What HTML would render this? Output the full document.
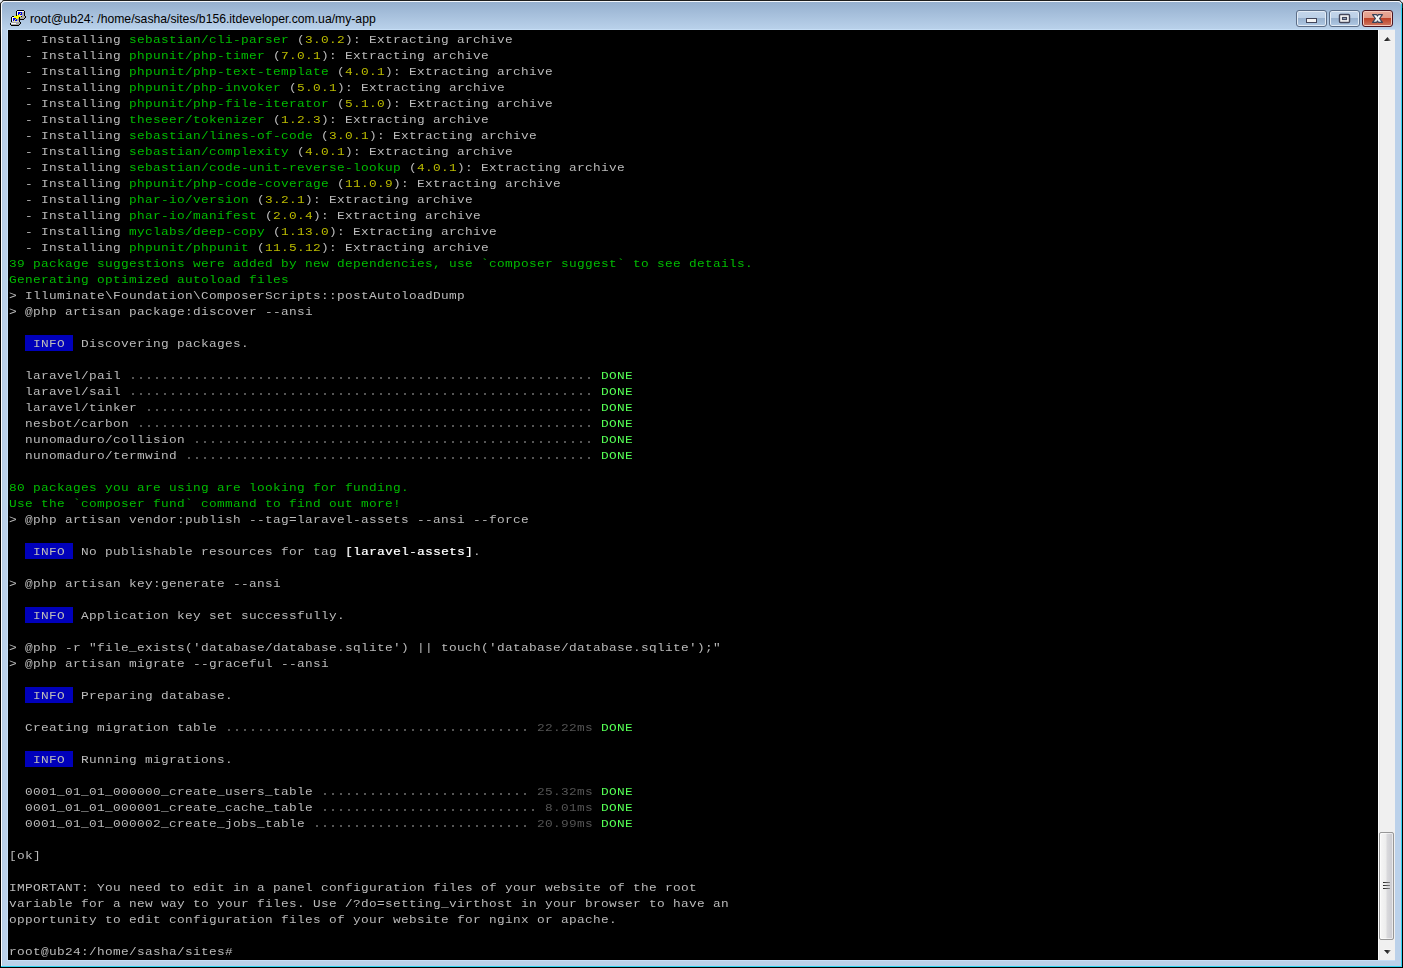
<!DOCTYPE html>
<html><head><meta charset="utf-8">
<style>
html,body{margin:0;padding:0;width:1403px;height:968px;overflow:hidden;background:#000;}
#win{position:absolute;left:0;top:0;width:1403px;height:968px;background:#BBD1EA;}
#bl{position:absolute;left:0;top:0;width:1px;height:968px;background:linear-gradient(#1e1e1e 0,#1e1e1e 30px,#000 40px,#000);}
#bl2{position:absolute;left:2px;top:29px;width:1px;height:937px;background:#B3CBE4;}
#bw{position:absolute;left:1px;top:1px;width:1px;height:966px;background:#fdfdfe;}
#bt{position:absolute;left:0;top:0;width:1403px;height:1px;background:#1e1e1e;}
#btw{position:absolute;left:1px;top:1px;width:1398px;height:1px;background:#f4f7fb;}
#title{position:absolute;left:2px;top:2px;width:1399px;height:27px;background:linear-gradient(#96B0CF,#B9D1EA);}
#br{position:absolute;left:1402px;top:0;width:1px;height:968px;background:#000;}
#brc{position:absolute;left:1401px;top:2px;width:1px;height:965px;background:#2fd4f2;}
#bb{position:absolute;left:0;top:967px;width:1403px;height:1px;background:#000;}
#bbc{position:absolute;left:1px;top:966px;width:1401px;height:1px;background:#2fd4f2;}
#inner{position:absolute;left:7px;top:29px;width:1388px;height:932px;background:#C6DEF6;}
#term{position:absolute;left:8px;top:30px;width:1370px;height:930px;background:#000;overflow:hidden;}
#rows{position:absolute;left:9px;top:32px;width:1369px;height:928px;overflow:hidden;will-change:transform}
.r{position:absolute;left:0;height:16px;line-height:16px;white-space:pre;font-family:"Liberation Mono",monospace;font-size:12.8px;letter-spacing:0.32px;color:#BBBBBB;transform:scaleY(0.9);transform-origin:0 12px;}
.g{color:#00BB00}.y{color:#BBBB00}.G{color:#55FF55}.k{color:#555555}.w{color:#FFFFFF;text-shadow:0.5px 0 0 rgba(255,255,255,0.55)}
.INFO{color:#BBBBBB}
.bg{position:absolute;height:16px;background:#0000BB;}
.dots{position:absolute;height:16px;background:linear-gradient(90deg,transparent 3px,#555555 3px,#555555 5px,transparent 5px) 0 10px/8px 2px repeat-x;}
#ttext{position:absolute;left:30px;top:11px;font-family:"Liberation Sans",sans-serif;font-size:12.2px;color:#000;white-space:pre;line-height:16px;}
#sb{position:absolute;left:1378px;top:30px;width:17px;height:930px;background:#F0F0F0;}

.cb{position:absolute;top:10px;width:29px;height:15px;border:1px solid #5C6E88;border-radius:3px;box-shadow:inset 0 0 0 1px #E3ECF6;background:linear-gradient(#C3D5EA 0,#BCD0E7 7px,#98B1CE 7px,#A6BFDB 12px,#B2CBE6 15px);}
#bmin{left:1296px}#bmax{left:1329px}
#bclose{left:1362px;border-color:#4A1420;box-shadow:inset 0 0 0 1px #F6C9BC;background:linear-gradient(#E9AA99 0,#E29A88 7px,#BD3F25 7px,#C45A42 11px,#D07A64 15px);}
.sbarrow{position:absolute;left:1384px;width:0;height:0;border-left:3.5px solid transparent;border-right:3.5px solid transparent;}
#sbup{top:37px;border-bottom:4px solid #3a3a3a;}
#sbdn{top:950px;border-top:4px solid #3a3a3a;}
#thumb{position:absolute;left:1379px;top:832px;width:13px;height:106px;border:1px solid #979797;border-radius:2px;background:linear-gradient(90deg,#F6F6F6 0,#EDEDED 45%,#D9D9DC 55%,#CACACF 100%);box-shadow:inset 0 0 0 1px rgba(255,255,255,.6);}
.grip{position:absolute;left:1383px;width:7px;height:1px;background:linear-gradient(90deg,#222,#888);}
#sbedge{position:absolute;left:1378px;top:30px;width:1px;height:930px;background:#FCFCFC;}
#sbedge2{position:absolute;left:1379px;top:30px;width:1px;height:930px;background:#E6E6E6;}
</style></head><body>
<div id="win">
<div id="title"></div>
<div id="inner"></div>
<div id="bt"></div><div id="btw"></div>
<div id="bl"></div><div id="bl2"></div><div id="bw"></div>
<div id="br"></div><div id="brc"></div>
<div id="bb"></div><div id="bbc"></div>
<svg width="8" height="8" style="position:absolute;left:0;top:0"><rect x="0" y="0" width="8" height="8" fill="none"/><path d="M0 0 H5 A5 5 0 0 0 0 5 Z" fill="#E4EAF1"/><path d="M0.5 8 V5 A4.5 4.5 0 0 1 5 0.5 H8" fill="none" stroke="#1e1e1e" stroke-width="1"/><path d="M1.5 8 V5 A3.5 3.5 0 0 1 5 1.5 H8" fill="none" stroke="#f6f8fb" stroke-width="1"/></svg>
<svg width="8" height="8" style="position:absolute;left:1395px;top:0"><path d="M8 0 H3 A5 5 0 0 1 8 5 Z" fill="#E4EAF1"/><path d="M7.5 8 V5 A4.5 4.5 0 0 0 3 0.5 H0" fill="none" stroke="#1e1e1e" stroke-width="1"/><path d="M6.5 8 V5 A3.5 3.5 0 0 0 3 1.5 H0" fill="none" stroke="#f4f7fb" stroke-width="1"/><path d="M6.5 8 V4" stroke="#2fd4f2" stroke-width="1"/></svg>
<svg id="icon" width="18" height="18" viewBox="0 0 18 18" shape-rendering="crispEdges" style="position:absolute;left:9px;top:9px"><rect x="1" y="14" width="1" height="1" fill="#000"/><rect x="1" y="15" width="1" height="1" fill="#000"/><rect x="2" y="8" width="1" height="1" fill="#000"/><rect x="2" y="9" width="1" height="1" fill="#000"/><rect x="2" y="10" width="1" height="1" fill="#000"/><rect x="2" y="11" width="1" height="1" fill="#000"/><rect x="2" y="12" width="1" height="1" fill="#000"/><rect x="2" y="13" width="1" height="1" fill="#A8A8A8"/><rect x="2" y="14" width="1" height="1" fill="#FFFFFF"/><rect x="2" y="15" width="1" height="1" fill="#A8A8A8"/><rect x="2" y="16" width="1" height="1" fill="#000"/><rect x="3" y="7" width="1" height="1" fill="#000"/><rect x="3" y="8" width="1" height="1" fill="#FFFFFF"/><rect x="3" y="9" width="1" height="1" fill="#FFFFFF"/><rect x="3" y="10" width="1" height="1" fill="#FFFFFF"/><rect x="3" y="11" width="1" height="1" fill="#FFFFFF"/><rect x="3" y="12" width="1" height="1" fill="#D8D8D8"/><rect x="3" y="13" width="1" height="1" fill="#A8A8A8"/><rect x="3" y="14" width="1" height="1" fill="#FFFFFF"/><rect x="3" y="15" width="1" height="1" fill="#A8A8A8"/><rect x="3" y="16" width="1" height="1" fill="#000"/><rect x="4" y="7" width="1" height="1" fill="#000"/><rect x="4" y="8" width="1" height="1" fill="#FFFFFF"/><rect x="4" y="9" width="1" height="1" fill="#0000F0"/><rect x="4" y="10" width="1" height="1" fill="#0000F0"/><rect x="4" y="11" width="1" height="1" fill="#0000F0"/><rect x="4" y="12" width="1" height="1" fill="#D8D8D8"/><rect x="4" y="13" width="1" height="1" fill="#A8A8A8"/><rect x="4" y="14" width="1" height="1" fill="#FFFFFF"/><rect x="4" y="15" width="1" height="1" fill="#A8A8A8"/><rect x="4" y="16" width="1" height="1" fill="#000"/><rect x="5" y="7" width="1" height="1" fill="#FFFF00"/><rect x="5" y="8" width="1" height="1" fill="#FFFF00"/><rect x="5" y="9" width="1" height="1" fill="#0000F0"/><rect x="5" y="10" width="1" height="1" fill="#0000F0"/><rect x="5" y="11" width="1" height="1" fill="#FFFF00"/><rect x="5" y="12" width="1" height="1" fill="#D8D8D8"/><rect x="5" y="13" width="1" height="1" fill="#A8A8A8"/><rect x="5" y="14" width="1" height="1" fill="#FFFFFF"/><rect x="5" y="15" width="1" height="1" fill="#A8A8A8"/><rect x="5" y="16" width="1" height="1" fill="#000"/><rect x="6" y="7" width="1" height="1" fill="#FFFF00"/><rect x="6" y="8" width="1" height="1" fill="#FFFF00"/><rect x="6" y="9" width="1" height="1" fill="#0000F0"/><rect x="6" y="10" width="1" height="1" fill="#FFFF00"/><rect x="6" y="11" width="1" height="1" fill="#0000F0"/><rect x="6" y="12" width="1" height="1" fill="#D8D8D8"/><rect x="6" y="13" width="1" height="1" fill="#A8A8A8"/><rect x="6" y="14" width="1" height="1" fill="#FFFFFF"/><rect x="6" y="15" width="1" height="1" fill="#A8A8A8"/><rect x="6" y="16" width="1" height="1" fill="#000"/><rect x="7" y="2" width="1" height="1" fill="#000"/><rect x="7" y="3" width="1" height="1" fill="#000"/><rect x="7" y="4" width="1" height="1" fill="#000"/><rect x="7" y="5" width="1" height="1" fill="#000"/><rect x="7" y="6" width="1" height="1" fill="#000"/><rect x="7" y="7" width="1" height="1" fill="#FFFF00"/><rect x="7" y="8" width="1" height="1" fill="#FFFF00"/><rect x="7" y="9" width="1" height="1" fill="#FFFF00"/><rect x="7" y="10" width="1" height="1" fill="#0000F0"/><rect x="7" y="11" width="1" height="1" fill="#0000F0"/><rect x="7" y="12" width="1" height="1" fill="#D8D8D8"/><rect x="7" y="13" width="1" height="1" fill="#A8A8A8"/><rect x="7" y="14" width="1" height="1" fill="#A8A8A8"/><rect x="7" y="15" width="1" height="1" fill="#A8A8A8"/><rect x="7" y="16" width="1" height="1" fill="#000"/><rect x="8" y="1" width="1" height="1" fill="#000"/><rect x="8" y="2" width="1" height="1" fill="#FFFFFF"/><rect x="8" y="3" width="1" height="1" fill="#FFFFFF"/><rect x="8" y="4" width="1" height="1" fill="#FFFFFF"/><rect x="8" y="5" width="1" height="1" fill="#FFFFFF"/><rect x="8" y="6" width="1" height="1" fill="#FFFF00"/><rect x="8" y="7" width="1" height="1" fill="#FFFF00"/><rect x="8" y="8" width="1" height="1" fill="#FFFF00"/><rect x="8" y="9" width="1" height="1" fill="#FFFF00"/><rect x="8" y="10" width="1" height="1" fill="#A8A8A8"/><rect x="8" y="11" width="1" height="1" fill="#A8A8A8"/><rect x="8" y="12" width="1" height="1" fill="#D8D8D8"/><rect x="8" y="13" width="1" height="1" fill="#A8A8A8"/><rect x="8" y="14" width="1" height="1" fill="#A8A8A8"/><rect x="8" y="15" width="1" height="1" fill="#A8A8A8"/><rect x="8" y="16" width="1" height="1" fill="#000"/><rect x="9" y="1" width="1" height="1" fill="#000"/><rect x="9" y="2" width="1" height="1" fill="#FFFFFF"/><rect x="9" y="3" width="1" height="1" fill="#0000F0"/><rect x="9" y="4" width="1" height="1" fill="#0000F0"/><rect x="9" y="5" width="1" height="1" fill="#0000F0"/><rect x="9" y="6" width="1" height="1" fill="#FFFF00"/><rect x="9" y="7" width="1" height="1" fill="#FFFF00"/><rect x="9" y="8" width="1" height="1" fill="#FFFF00"/><rect x="9" y="9" width="1" height="1" fill="#A8A8A8"/><rect x="9" y="10" width="1" height="1" fill="#A8A8A8"/><rect x="9" y="11" width="1" height="1" fill="#A8A8A8"/><rect x="9" y="12" width="1" height="1" fill="#D8D8D8"/><rect x="9" y="13" width="1" height="1" fill="#A8A8A8"/><rect x="9" y="14" width="1" height="1" fill="#A8A8A8"/><rect x="9" y="15" width="1" height="1" fill="#A8A8A8"/><rect x="9" y="16" width="1" height="1" fill="#000"/><rect x="10" y="1" width="1" height="1" fill="#000"/><rect x="10" y="2" width="1" height="1" fill="#FFFFFF"/><rect x="10" y="3" width="1" height="1" fill="#0000F0"/><rect x="10" y="4" width="1" height="1" fill="#0000F0"/><rect x="10" y="5" width="1" height="1" fill="#FFFF00"/><rect x="10" y="6" width="1" height="1" fill="#D8D8D8"/><rect x="10" y="7" width="1" height="1" fill="#FFFF00"/><rect x="10" y="8" width="1" height="1" fill="#000"/><rect x="10" y="9" width="1" height="1" fill="#000"/><rect x="10" y="10" width="1" height="1" fill="#000"/><rect x="10" y="11" width="1" height="1" fill="#000"/><rect x="10" y="12" width="1" height="1" fill="#000"/><rect x="10" y="13" width="1" height="1" fill="#A8A8A8"/><rect x="10" y="14" width="1" height="1" fill="#A8A8A8"/><rect x="10" y="15" width="1" height="1" fill="#000"/><rect x="11" y="1" width="1" height="1" fill="#000"/><rect x="11" y="2" width="1" height="1" fill="#FFFFFF"/><rect x="11" y="3" width="1" height="1" fill="#0000F0"/><rect x="11" y="4" width="1" height="1" fill="#FFFF00"/><rect x="11" y="5" width="1" height="1" fill="#0000F0"/><rect x="11" y="6" width="1" height="1" fill="#D8D8D8"/><rect x="11" y="7" width="1" height="1" fill="#FFFF00"/><rect x="11" y="8" width="1" height="1" fill="#A8A8A8"/><rect x="11" y="9" width="1" height="1" fill="#A8A8A8"/><rect x="11" y="10" width="1" height="1" fill="#000"/><rect x="11" y="13" width="1" height="1" fill="#000"/><rect x="11" y="14" width="1" height="1" fill="#000"/><rect x="12" y="1" width="1" height="1" fill="#000"/><rect x="12" y="2" width="1" height="1" fill="#FFFFFF"/><rect x="12" y="3" width="1" height="1" fill="#0000F0"/><rect x="12" y="4" width="1" height="1" fill="#0000F0"/><rect x="12" y="5" width="1" height="1" fill="#0000F0"/><rect x="12" y="6" width="1" height="1" fill="#D8D8D8"/><rect x="12" y="7" width="1" height="1" fill="#000"/><rect x="12" y="8" width="1" height="1" fill="#A8A8A8"/><rect x="12" y="9" width="1" height="1" fill="#A8A8A8"/><rect x="12" y="10" width="1" height="1" fill="#000"/><rect x="13" y="1" width="1" height="1" fill="#000"/><rect x="13" y="2" width="1" height="1" fill="#FFFFFF"/><rect x="13" y="3" width="1" height="1" fill="#A8A8A8"/><rect x="13" y="4" width="1" height="1" fill="#A8A8A8"/><rect x="13" y="5" width="1" height="1" fill="#A8A8A8"/><rect x="13" y="6" width="1" height="1" fill="#A8A8A8"/><rect x="13" y="7" width="1" height="1" fill="#A8A8A8"/><rect x="13" y="8" width="1" height="1" fill="#A8A8A8"/><rect x="13" y="9" width="1" height="1" fill="#A8A8A8"/><rect x="13" y="10" width="1" height="1" fill="#000"/><rect x="14" y="1" width="1" height="1" fill="#000"/><rect x="14" y="2" width="1" height="1" fill="#FFFFFF"/><rect x="14" y="3" width="1" height="1" fill="#A8A8A8"/><rect x="14" y="4" width="1" height="1" fill="#A8A8A8"/><rect x="14" y="5" width="1" height="1" fill="#A8A8A8"/><rect x="14" y="6" width="1" height="1" fill="#A8A8A8"/><rect x="14" y="7" width="1" height="1" fill="#A8A8A8"/><rect x="14" y="8" width="1" height="1" fill="#A8A8A8"/><rect x="14" y="9" width="1" height="1" fill="#A8A8A8"/><rect x="14" y="10" width="1" height="1" fill="#000"/><rect x="15" y="2" width="1" height="1" fill="#000"/><rect x="15" y="3" width="1" height="1" fill="#000"/><rect x="15" y="4" width="1" height="1" fill="#000"/><rect x="15" y="5" width="1" height="1" fill="#000"/><rect x="15" y="6" width="1" height="1" fill="#000"/><rect x="15" y="7" width="1" height="1" fill="#A8A8A8"/><rect x="15" y="8" width="1" height="1" fill="#A8A8A8"/><rect x="15" y="9" width="1" height="1" fill="#000"/><rect x="16" y="7" width="1" height="1" fill="#000"/><rect x="16" y="8" width="1" height="1" fill="#000"/></svg>
<div id="ttext">root@ub24: /home/sasha/sites/b156.itdeveloper.com.ua/my-app</div>
<div id="term"></div>
<div class="bg" style="left:25px;top:335px;width:48px"></div>
<div class="dots" style="left:129px;top:367px;width:464px"></div>
<div class="dots" style="left:129px;top:383px;width:464px"></div>
<div class="dots" style="left:145px;top:399px;width:448px"></div>
<div class="dots" style="left:137px;top:415px;width:456px"></div>
<div class="dots" style="left:193px;top:431px;width:400px"></div>
<div class="dots" style="left:185px;top:447px;width:408px"></div>
<div class="bg" style="left:25px;top:543px;width:48px"></div>
<div class="bg" style="left:25px;top:607px;width:48px"></div>
<div class="bg" style="left:25px;top:687px;width:48px"></div>
<div class="dots" style="left:225px;top:719px;width:304px"></div>
<div class="bg" style="left:25px;top:751px;width:48px"></div>
<div class="dots" style="left:321px;top:783px;width:208px"></div>
<div class="dots" style="left:321px;top:799px;width:216px"></div>
<div class="dots" style="left:313px;top:815px;width:216px"></div>
<div id="rows">
<div class="r" style="top:0px">  - Installing <span class="g">sebastian/cli-parser</span> (<span class="y">3.0.2</span>): Extracting archive</div>
<div class="r" style="top:16px">  - Installing <span class="g">phpunit/php-timer</span> (<span class="y">7.0.1</span>): Extracting archive</div>
<div class="r" style="top:32px">  - Installing <span class="g">phpunit/php-text-template</span> (<span class="y">4.0.1</span>): Extracting archive</div>
<div class="r" style="top:48px">  - Installing <span class="g">phpunit/php-invoker</span> (<span class="y">5.0.1</span>): Extracting archive</div>
<div class="r" style="top:64px">  - Installing <span class="g">phpunit/php-file-iterator</span> (<span class="y">5.1.0</span>): Extracting archive</div>
<div class="r" style="top:80px">  - Installing <span class="g">theseer/tokenizer</span> (<span class="y">1.2.3</span>): Extracting archive</div>
<div class="r" style="top:96px">  - Installing <span class="g">sebastian/lines-of-code</span> (<span class="y">3.0.1</span>): Extracting archive</div>
<div class="r" style="top:112px">  - Installing <span class="g">sebastian/complexity</span> (<span class="y">4.0.1</span>): Extracting archive</div>
<div class="r" style="top:128px">  - Installing <span class="g">sebastian/code-unit-reverse-lookup</span> (<span class="y">4.0.1</span>): Extracting archive</div>
<div class="r" style="top:144px">  - Installing <span class="g">phpunit/php-code-coverage</span> (<span class="y">11.0.9</span>): Extracting archive</div>
<div class="r" style="top:160px">  - Installing <span class="g">phar-io/version</span> (<span class="y">3.2.1</span>): Extracting archive</div>
<div class="r" style="top:176px">  - Installing <span class="g">phar-io/manifest</span> (<span class="y">2.0.4</span>): Extracting archive</div>
<div class="r" style="top:192px">  - Installing <span class="g">myclabs/deep-copy</span> (<span class="y">1.13.0</span>): Extracting archive</div>
<div class="r" style="top:208px">  - Installing <span class="g">phpunit/phpunit</span> (<span class="y">11.5.12</span>): Extracting archive</div>
<div class="r" style="top:224px"><span class="g">39 package suggestions were added by new dependencies, use `composer suggest` to see details.</span></div>
<div class="r" style="top:240px"><span class="g">Generating optimized autoload files</span></div>
<div class="r" style="top:256px">&gt; Illuminate\Foundation\ComposerScripts::postAutoloadDump</div>
<div class="r" style="top:272px">&gt; @php artisan package:discover --ansi</div>
<div class="r" style="top:304px">  <span class="INFO"> INFO </span> Discovering packages.</div>
<div class="r" style="top:336px">  laravel/pail <span class="k">                                                          </span> <span class="G">DONE</span></div>
<div class="r" style="top:352px">  laravel/sail <span class="k">                                                          </span> <span class="G">DONE</span></div>
<div class="r" style="top:368px">  laravel/tinker <span class="k">                                                        </span> <span class="G">DONE</span></div>
<div class="r" style="top:384px">  nesbot/carbon <span class="k">                                                         </span> <span class="G">DONE</span></div>
<div class="r" style="top:400px">  nunomaduro/collision <span class="k">                                                  </span> <span class="G">DONE</span></div>
<div class="r" style="top:416px">  nunomaduro/termwind <span class="k">                                                   </span> <span class="G">DONE</span></div>
<div class="r" style="top:448px"><span class="g">80 packages you are using are looking for funding.</span></div>
<div class="r" style="top:464px"><span class="g">Use the `composer fund` command to find out more!</span></div>
<div class="r" style="top:480px">&gt; @php artisan vendor:publish --tag=laravel-assets --ansi --force</div>
<div class="r" style="top:512px">  <span class="INFO"> INFO </span> No publishable resources for tag <span class="w">[laravel-assets]</span>.</div>
<div class="r" style="top:544px">&gt; @php artisan key:generate --ansi</div>
<div class="r" style="top:576px">  <span class="INFO"> INFO </span> Application key set successfully.</div>
<div class="r" style="top:608px">&gt; @php -r "file_exists('database/database.sqlite') || touch('database/database.sqlite');"</div>
<div class="r" style="top:624px">&gt; @php artisan migrate --graceful --ansi</div>
<div class="r" style="top:656px">  <span class="INFO"> INFO </span> Preparing database.</div>
<div class="r" style="top:688px">  Creating migration table <span class="k">                                      </span> <span class="k">22.22ms</span> <span class="G">DONE</span></div>
<div class="r" style="top:720px">  <span class="INFO"> INFO </span> Running migrations.</div>
<div class="r" style="top:752px">  0001_01_01_000000_create_users_table <span class="k">                          </span> <span class="k">25.32ms</span> <span class="G">DONE</span></div>
<div class="r" style="top:768px">  0001_01_01_000001_create_cache_table <span class="k">                           </span> <span class="k">8.01ms</span> <span class="G">DONE</span></div>
<div class="r" style="top:784px">  0001_01_01_000002_create_jobs_table <span class="k">                           </span> <span class="k">20.99ms</span> <span class="G">DONE</span></div>
<div class="r" style="top:816px">[ok]</div>
<div class="r" style="top:848px">IMPORTANT: You need to edit in a panel configuration files of your website of the root</div>
<div class="r" style="top:864px">variable for a new way to your files. Use /?do=setting_virthost in your browser to have an</div>
<div class="r" style="top:880px">opportunity to edit configuration files of your website for nginx or apache.</div>
<div class="r" style="top:912px">root@ub24:/home/sasha/sites#</div>
</div>
<div id="sb"></div>
<div class="cb" id="bmin"><svg width="29" height="15" style="position:absolute;left:0;top:0" shape-rendering="crispEdges"><rect x="9.5" y="7.5" width="10" height="4" rx="1" fill="#F4F4F4" stroke="#43465A" stroke-width="1.3"/></svg></div>
<div class="cb" id="bmax"><svg width="29" height="15" style="position:absolute;left:0;top:0"><rect x="9.5" y="3.5" width="10" height="8" rx="1" fill="#F8F8F8" stroke="#43465A" stroke-width="1.4"/><rect x="12.5" y="6.5" width="4" height="2" fill="#9DB4D0" stroke="#43465A" stroke-width="1.2"/></svg></div>
<div class="cb" id="bclose"><svg width="29" height="15" style="position:absolute;left:0;top:0"><defs><linearGradient id="xg" x1="0" y1="0" x2="0" y2="1"><stop offset="0" stop-color="#FFFFFF"/><stop offset="1" stop-color="#E4E4E4"/></linearGradient></defs><polygon points="9.6,3.6 13.6,3.6 14.5,5 15.4,3.6 19.4,3.6 16.6,7.5 19.4,11.4 15.4,11.4 14.5,10 13.6,11.4 9.6,11.4 12.4,7.5" fill="url(#xg)" stroke="#3A4258" stroke-width="1.2" stroke-linejoin="round"/></svg></div>
<div id="sbedge"></div><div id="sbedge2"></div>
<svg style="position:absolute;left:1382px;top:35px" width="11" height="8"><defs><linearGradient id="ag" x1="0" y1="0" x2="1" y2="0"><stop offset="0" stop-color="#151515"/><stop offset="0.5" stop-color="#303030"/><stop offset="1" stop-color="#9a9a9a"/></linearGradient></defs><polygon points="1.5,6.5 9.5,6.5 5.5,1.5" fill="#fff" opacity="0.7"/><polygon points="2,6 9,6 5.5,2" fill="url(#ag)"/></svg>
<svg style="position:absolute;left:1382px;top:948px" width="11" height="8"><polygon points="1.5,1.5 9.5,1.5 5.5,6.5" fill="#fff" opacity="0.7"/><polygon points="2,2 9,2 5.5,6" fill="url(#ag)"/></svg>
<div id="thumb"></div>
<div class="grip" style="top:882px"></div><div class="grip" style="top:885px"></div><div class="grip" style="top:888px"></div>

</div>
</body></html>
